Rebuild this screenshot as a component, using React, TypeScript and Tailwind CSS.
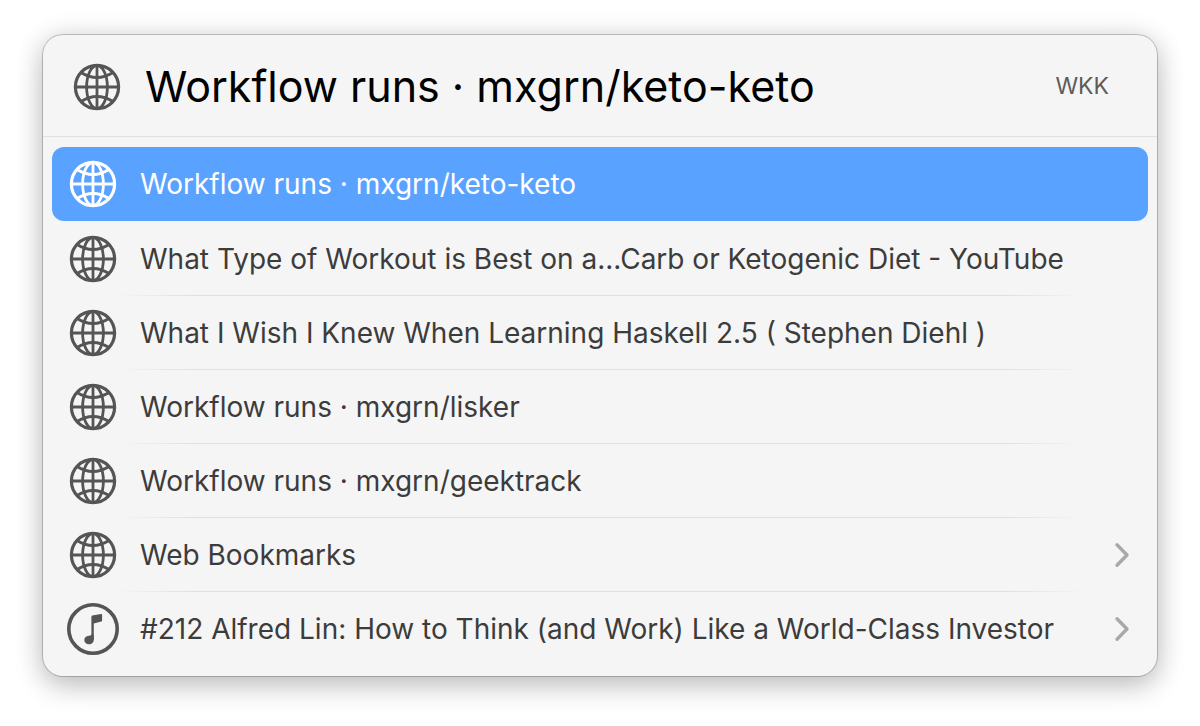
import clsx from "clsx";

type Item = {
    title: string;
    icon: "globe" | "music";
    more?: boolean;
};

const items: Item[] = [
    { title: "Workflow runs · mxgrn/keto-keto", icon: "globe" },
    { title: "What Type of Workout is Best on a...Carb or Ketogenic Diet - YouTube", icon: "globe" },
    { title: "What I Wish I Knew When Learning Haskell 2.5 ( Stephen Diehl )", icon: "globe" },
    { title: "Workflow runs · mxgrn/lisker", icon: "globe" },
    { title: "Workflow runs · mxgrn/geektrack", icon: "globe" },
    { title: "Web Bookmarks", icon: "globe", more: true },
    { title: "#212 Alfred Lin: How to Think (and Work) Like a World-Class Investor", icon: "music", more: true },
];

function Globe() {
    return (
        <svg className="size-13 shrink-0" viewBox="0 0 52 52" fill="none" stroke="currentColor" strokeWidth={2.8} aria-hidden="true">
            <circle cx="26" cy="26" r="21.6" strokeWidth={3.2} />
            <ellipse cx="26" cy="26" rx="10.4" ry="21.5" />
            <path d="M26 4v44M4 26h44" />
            <path d="M10 11.5Q26 21.5 42 11.5M10 40.5Q26 30.5 42 40.5" />
        </svg>
    );
}

function Music() {
    return (
        <svg className="size-13 shrink-0" viewBox="0 0 52 52" fill="currentColor" aria-hidden="true">
            <circle cx="26" cy="26" r="24.2" fill="none" stroke="currentColor" strokeWidth={3.6} />
            <path d="M24.4 13.8q0-1 .9-1.2l8.7-1.5q1.100-.2 1.100.8v5.6q0 .8-.8 1l-7.500 1.900V37h-2.400z" />
            <path d="M26.800 32v4.400c0 2.900-2 4.900-4.800 4.900-2.700 0-4.700-1.700-4.700-4.200 0-2.500 1.900-4.100 4.600-4.400 1.900-.2 2.500-.5 2.500-1.500z" />
        </svg>
    );
}

function Chevron() {
    return (
        <svg className="h-7 w-4 shrink-0 text-[#a9a9a9]" viewBox="0 0 16 28" fill="none" stroke="currentColor" strokeWidth={3.4} strokeLinecap="round" strokeLinejoin="round" aria-hidden="true">
            <path d="M3 3.8L13 14 3 24.2" />
        </svg>
    );
}

export default function App() {
    return (
        <div className="min-h-screen bg-white px-[43px] py-[35px] font-['Inter',sans-serif]">
            <main className="rounded-[20px] bg-[#f5f5f5] shadow-[0_0_0_1px_rgba(0,0,0,0.2),0_10px_28px_rgba(0,0,0,0.22),0_0_28px_rgba(0,0,0,0.1)]">
                {/* Search bar */}
                <header className="flex h-[102px] items-center gap-[22px] border-b border-[#dfe1e0] pt-0.5 pr-12 pl-7">
                    <span className="text-[#555555]">
                        <Globe />
                    </span>
                    <input
                        type="text"
                        aria-label="Search"
                        defaultValue="Workflow runs · mxgrn/keto-keto"
                        className="min-w-0 flex-1 bg-transparent text-[43px] text-black outline-none"
                    />
                    <span className="text-[23px] text-[#5c5c5c]">WKK</span>
                </header>

                {/* Results */}
                <ul className="px-[9px] pt-[10px] pb-[11px]">
                    {items.map((item, i) => (
                        <li key={item.title}>
                            <a
                                href="#"
                                className={clsx(
                                    "flex items-center gap-[21px] pr-[18px] pl-[15px]",
                                    i === 0 ? "h-[74px] rounded-xl bg-[#5aa2ff] text-white" : "h-[73px] text-[#555555]"
                                )}
                            >
                                {item.icon === "globe" ? <Globe /> : <Music />}
                                <span className={clsx("flex-1 truncate text-[28px]", i > 0 && "text-[#3c3c3c]")}>
                                    {item.title}
                                </span>
                                {item.more && <Chevron />}
                            </a>
                            {i < items.length - 1 && (
                                <hr
                                    className={clsx(
                                        "mx-16 h-px border-0",
                                        i > 0 && "bg-[linear-gradient(to_right,transparent,#e0e0e0_8%,#e0e0e0_92%,transparent)]"
                                    )}
                                />
                            )}
                        </li>
                    ))}
                </ul>
            </main>
        </div>
    );
}
